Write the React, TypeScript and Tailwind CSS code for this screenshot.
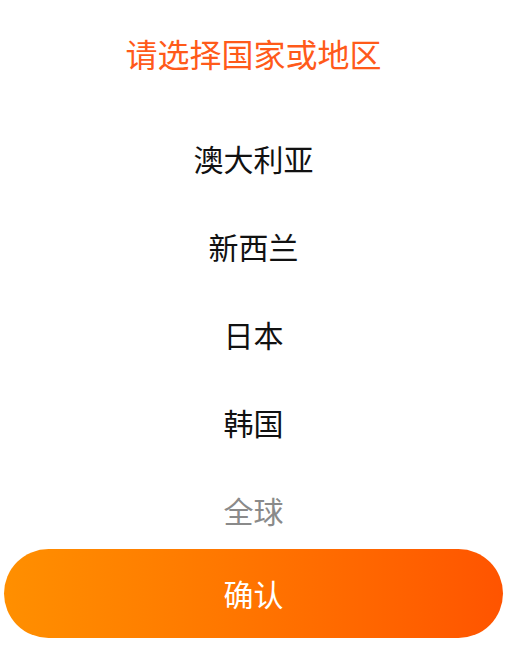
export default function App() {
  const items = ["澳大利亚", "新西兰", "日本", "韩国"];
  return (
    <div
      className="w-[531px] h-[645px] bg-white overflow-hidden"
      style={{ fontFamily: '"Noto Sans CJK SC", "Noto Sans", sans-serif' }}
    >
      <div className="w-[507px] flex flex-col">
        <div className="h-[106px] flex items-center justify-center text-[32px] text-[#ff5a1a]">
          请选择国家或地区
        </div>
        <div className="mt-[8px] h-[435px] overflow-hidden flex flex-col">
          {items.map((t) => (
            <div key={t} className="h-[88px] shrink-0 flex items-center justify-center text-[30px] text-[#111]">
              {t}
            </div>
          ))}
          <div className="h-[88px] shrink-0 flex items-center justify-center text-[30px] text-[#8a8a8a]">
            全球
          </div>
        </div>
        <div className="px-[4px]">
          <button className="w-full h-[89px] rounded-full bg-gradient-to-r from-[#ff8f00] to-[#ff5400] text-white text-[30px] flex items-center justify-center">
            确认
          </button>
        </div>
      </div>
    </div>
  );
}
